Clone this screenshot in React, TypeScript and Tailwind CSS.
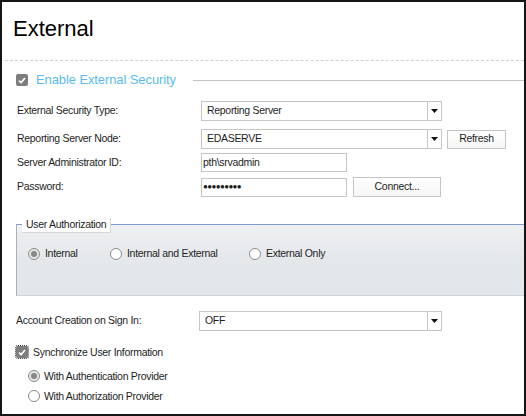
import React from "react";

const Arrow = () => (
  <svg width="7" height="4" viewBox="0 0 7 4">
    <path d="M0 0 H7 L3.5 4 Z" fill="#111" />
  </svg>
);

const Select: React.FC<{ value: string; className?: string }> = ({ value, className }) => (
  <div className={`flex h-[20px] border border-[#c6c6c6] bg-white ${className ?? ""}`}>
    <div className="flex flex-1 items-center pl-[5px]">{value}</div>
    <div className="flex w-[14px] items-center justify-center border-l border-[#c6c6c6]">
      <Arrow />
    </div>
  </div>
);

const Button: React.FC<{ label: string; className?: string }> = ({ label, className }) => (
  <div
    className={`flex items-center justify-center border border-[#c6c6c6] bg-gradient-to-b from-white to-[#f6f6f6] ${className ?? ""}`}
  >
    {label}
  </div>
);

const Check: React.FC<{ focus?: boolean }> = ({ focus }) => (
  <div
    className={`flex h-[12px] w-[12px] shrink-0 items-center justify-center rounded-[2px] bg-[#7d7d7d] ${
      focus ? "outline outline-1 outline-dotted outline-[#3a3a3a]" : ""
    }`}
  >
    <svg width="8" height="7" viewBox="0 0 8 7">
      <path d="M1 3.6 L3.1 5.6 L7 1" stroke="#fff" strokeWidth="1.7" fill="none" />
    </svg>
  </div>
);

const Radio: React.FC<{ checked?: boolean }> = ({ checked }) => (
  <div
    className={`flex h-[12px] w-[12px] shrink-0 items-center justify-center rounded-full border border-[#8c8c8c] ${
      checked ? "bg-[#e6e6e6]" : "bg-white"
    }`}
  >
    {checked && <div className="h-[6px] w-[6px] rounded-full bg-[#878787]" />}
  </div>
);

const Row: React.FC<{ label: string; className?: string; children: React.ReactNode }> = ({
  label,
  className,
  children,
}) => (
  <div className={`flex items-center ${className ?? ""}`}>
    <div className="w-[184px] shrink-0">{label}</div>
    {children}
  </div>
);

export default function App() {
  return (
    <div className="h-[416px] w-[526px] overflow-hidden border-2 border-[#151515] bg-white font-['Liberation_Sans',Arial,sans-serif] text-[10.5px] tracking-[-0.3px] text-[#1e1e1e]">
      <h1 className="ml-[11px] mt-[14px] text-[22px] leading-[26px] tracking-normal text-black">External</h1>
      <div className="ml-[3px] mt-[18px] border-t border-dashed border-[#d2d2d2]" />

      <div className="ml-[14px] mt-[13px] flex h-[12px] items-center">
        <Check />
        <span className="ml-[8px] text-[13px] tracking-[-0.1px] text-[#5cbbec]">Enable External Security</span>
        <div className="ml-[17px] h-px flex-1 bg-[#c3c3c3]" />
      </div>

      <div className="pl-[15px]">
        <Row label="External Security Type:" className="mt-[15px]">
          <Select value="Reporting Server" className="w-[241px]" />
        </Row>
        <Row label="Reporting Server Node:" className="mt-[8px]">
          <Select value="EDASERVE" className="w-[241px]" />
          <Button label="Refresh" className="ml-[5px] h-[19px] w-[59px]" />
        </Row>
        <Row label="Server Administrator ID:" className="mt-[4px]">
          <div className="flex h-[19px] w-[146px] items-center border border-[#c6c6c6] pl-[1px]">pth\srvadmin</div>
        </Row>
        <Row label="Password:" className="mt-[5px]">
          <div className="flex h-[19px] w-[146px] items-center border border-[#c6c6c6] pl-[1px] text-[8px] tracking-[-0.6px]">
            ●●●●●●●●●
          </div>
          <Button label="Connect..." className="ml-[6px] h-[20px] w-[88px]" />
        </Row>
      </div>

      <div className="relative ml-[14px] mt-[27px] h-[72px] border border-t-[#7f9bc9] border-l-[#a9b0ba] border-b-[#cfd3d8] border-r-0 bg-gradient-to-b from-[#eef0f2] via-[#e5e8eb] to-[#e3e6ea]">
        <div className="absolute left-[5px] top-[-7px] flex h-[15px] items-center border-b border-r border-[#d6d6d6] bg-white px-[4px]">
          User Authorization
        </div>
        <div className="mt-[21px] flex items-center pl-[11px]">
          <div className="flex w-[82px] items-center gap-[5px]">
            <Radio checked />
            <span>Internal</span>
          </div>
          <div className="flex w-[139px] items-center gap-[5px]">
            <Radio />
            <span>Internal and External</span>
          </div>
          <div className="flex items-center gap-[5px]">
            <Radio />
            <span>External Only</span>
          </div>
        </div>
      </div>

      <div className="pl-[14px]">
        <Row label="Account Creation on Sign In:" className="mt-[15px]">
          <div className="-ml-px">
            <Select value="OFF" className="w-[243px]" />
          </div>
        </Row>
        <div className="mt-[14px] flex h-[14px] items-center leading-[14px]">
          <Check focus />
          <span className="ml-[5px]">Synchronize User Information</span>
        </div>
        <div className="ml-[12px] mt-[10px] flex h-[14px] items-center gap-[4px] leading-[14px]">
          <Radio checked />
          <span>With Authentication Provider</span>
        </div>
        <div className="ml-[12px] mt-[6px] flex h-[14px] items-center gap-[4px] leading-[14px]">
          <Radio />
          <span>With Authorization Provider</span>
        </div>
      </div>
    </div>
  );
}
